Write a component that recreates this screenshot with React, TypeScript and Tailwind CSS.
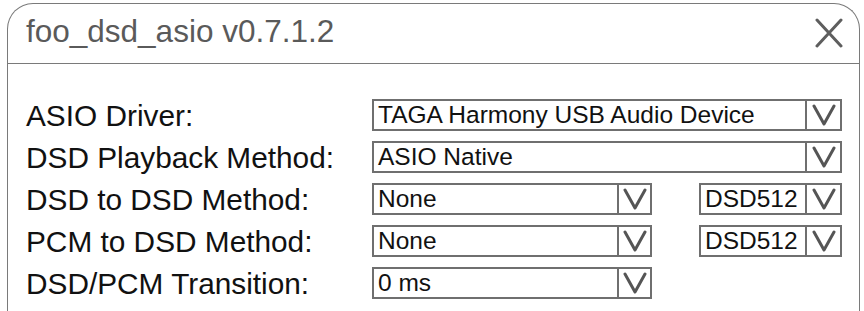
import React from "react";

const Chevron = () => (
  <svg width="24" height="22" viewBox="0 0 24 22" fill="none">
    <path d="M2 2 L12 20 L22 2" stroke="#555555" strokeWidth="3" strokeLinecap="round" strokeLinejoin="round" />
  </svg>
);

function Select({ value, width, arrowW }: { value: string; width: string; arrowW: string }) {
  return (
    <div className={`flex h-[32px] ${width} border-2 border-[#6f6f6f] bg-white`}>
      <div className="flex-1 flex items-center pl-[4px] pt-[1px] text-[24.5px] text-[#111] leading-none overflow-hidden whitespace-nowrap">
        {value}
      </div>
      <div className={`${arrowW} flex items-center justify-center border-l-2 border-[#6f6f6f]`}>
        <Chevron />
      </div>
    </div>
  );
}

export default function App() {
  const font = { fontFamily: '"Liberation Sans", Arial, sans-serif' };
  return (
    <div className="w-[864px] h-[311px] bg-white overflow-hidden" style={font}>
      <div className="ml-[7px] mt-[3px] w-[853px] h-[320px] rounded-t-[26px] border-[1.5px] border-b-0 border-[#7a7a7a] bg-white">
        <div className="h-[60px] flex items-center justify-between border-b-[1.5px] border-[#7a7a7a] pl-[18px] pr-[16px]">
          <span className="text-[31.5px] text-[#5a5a5a] leading-none mt-[-3px]">foo_dsd_asio v0.7.1.2</span>
          <svg width="28" height="30" viewBox="0 0 28 30" className="mt-[-2px]">
            <path d="M2 2 L26 28 M26 2 L2 28" stroke="#5e5e5e" strokeWidth="3" strokeLinecap="round" />
          </svg>
        </div>
        <div className="pt-[35px] pl-[18px] grid grid-cols-[346px_1fr] gap-y-[10px] text-[#111]">
          <div className="h-[32px] flex items-center pt-[2px] text-[29.8px] leading-none">ASIO Driver:</div>
          <div className="flex"><Select value="TAGA Harmony USB Audio Device" width="w-[470px]" arrowW="w-[35px]" /></div>

          <div className="h-[32px] flex items-center pt-[2px] text-[29.8px] leading-none">DSD Playback Method:</div>
          <div className="flex"><Select value="ASIO Native" width="w-[470px]" arrowW="w-[35px]" /></div>

          <div className="h-[32px] flex items-center pt-[2px] text-[29.8px] leading-none">DSD to DSD Method:</div>
          <div className="flex gap-[47px]">
            <Select value="None" width="w-[280px]" arrowW="w-[33px]" />
            <Select value="DSD512" width="w-[143px]" arrowW="w-[35px]" />
          </div>

          <div className="h-[32px] flex items-center pt-[2px] text-[29.8px] leading-none">PCM to DSD Method:</div>
          <div className="flex gap-[47px]">
            <Select value="None" width="w-[280px]" arrowW="w-[33px]" />
            <Select value="DSD512" width="w-[143px]" arrowW="w-[35px]" />
          </div>

          <div className="h-[32px] flex items-center pt-[2px] text-[29.8px] leading-none">DSD/PCM Transition:</div>
          <div className="flex"><Select value="0 ms" width="w-[280px]" arrowW="w-[33px]" /></div>
        </div>
      </div>
    </div>
  );
}
